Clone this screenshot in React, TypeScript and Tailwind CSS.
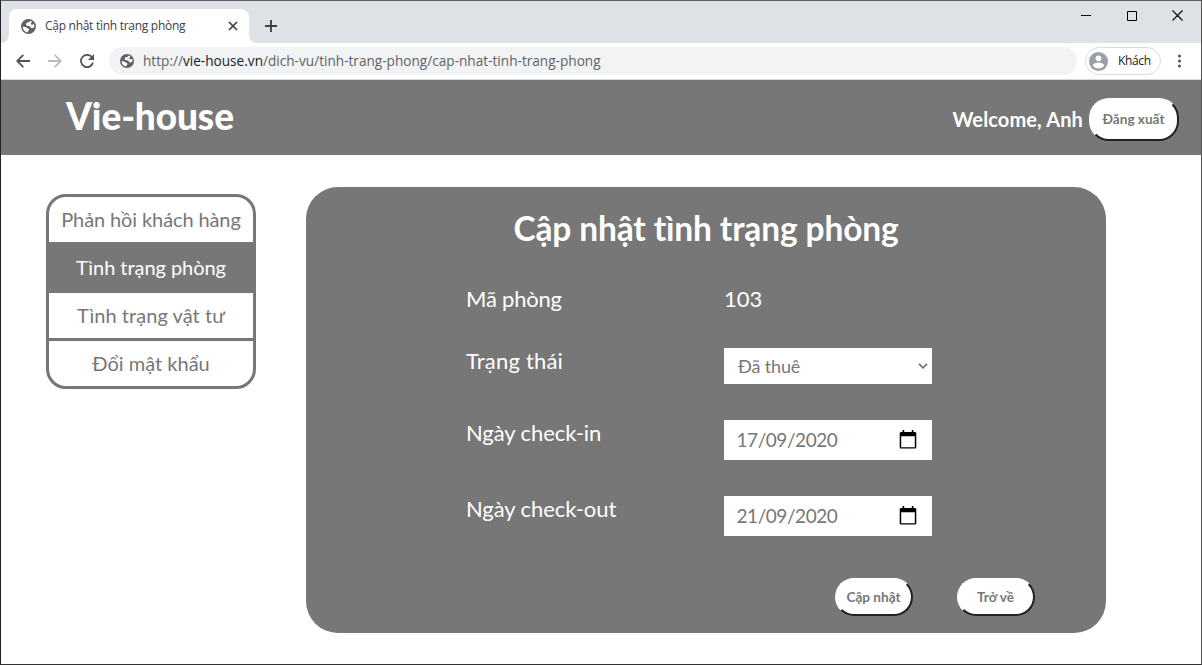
import type { ReactNode } from 'react';

function Globe({ className }: { className: string }) {
  return (
    <svg viewBox="0 0 14 14" className={className}>
      <circle cx="7" cy="7" r="7" fill="#5f6368" />
      <path
        d="M8.500 1.600C8.300 2.800 7.300 3 6.200 3.200C5 3.500 4.500 4.400 4.700 5.300C5 6.300 6.400 6.400 7.600 6.500C8.900 6.600 8.900 8.200 9.800 8.400C10.700 8.600 11.600 8.300 12.400 7.800C12.600 6.700 12.400 5.600 12 4.700C11.200 5.600 9.800 5.500 9.300 4.800C8.900 4.200 9.400 3.500 10.400 2.700C9.900 2.200 9.200 1.800 8.500 1.600ZM1.600 7.300C3 7.300 4.600 7.500 5.500 8.200C6.300 8.800 7.500 9 7.500 10C7.500 11 6.200 11 6.100 12.500C3.500 12.100 1.600 10 1.600 7.300Z"
        fill="#fff"
      />
    </svg>
  );
}

function PillButton({ className, children }: { className: string; children: ReactNode }) {
  return (
    <button
      className={`flex shrink-0 items-center justify-center whitespace-nowrap rounded-[20px] border-2 border-t-white border-l-white border-r-[#212121] border-b-[#212121] bg-white pr-px pb-px text-[13.6px] leading-4 font-bold text-[#777] ${className}`}
    >
      {children}
    </button>
  );
}

function Calendar() {
  return (
    <svg viewBox="0 0 18 20" className="h-5 w-[18px]" fill="#000">
      <path
        d="M3.6 0h1.6v2h7.6V0h1.6v2h1.4c.9 0 1.5.6 1.5 1.4v13.8c0 .8-.6 1.4-1.5 1.4H2.2c-.9 0-1.5-.6-1.5-1.4V3.400C.7 2.600 1.300 2 2.200 2h1.400zM2.200 6.300v10.900h13.600V6.300z"
        fillRule="evenodd"
      />
    </svg>
  );
}

function TabStrip() {
  return (
    <div className="flex h-[42px] shrink-0 items-end bg-[#dee1e6]">
      <svg viewBox="0 0 8 8" className="h-2 w-2">
        <path d="M8 0A8 8 0 0 1 0 8H8Z" fill="#fff" />
      </svg>
      <div className="flex h-[34px] w-60 items-center rounded-t-lg bg-white pl-3">
        <Globe className="h-[15px] w-[15px] shrink-0" />
        <span className="ml-[9px] w-[142px] whitespace-nowrap font-['Open_Sans','Noto_Sans',sans-serif] text-[12px] tracking-[-0.28px] text-[#3c4043]">
          Cập nhật tình trạng phòng
        </span>
        <svg viewBox="0 0 10 10" className="ml-[41px] h-[10px] w-[10px]" stroke="#3c4043" strokeWidth="1.700">
          <path d="M1 1L9 9M9 1L1 9" />
        </svg>
      </div>
      <svg viewBox="0 0 8 8" className="h-2 w-2">
        <path d="M0 0A8 8 0 0 0 8 8H0Z" fill="#fff" />
      </svg>
      <svg viewBox="0 0 12 12" className="mb-[11px] ml-2 h-3 w-3" stroke="#3c4043" strokeWidth="1.900">
        <path d="M6 0V12M0 6H12" />
      </svg>
      <div className="mr-[18px] mb-[22px] ml-auto flex items-center gap-[35px]">
        <svg viewBox="0 0 10 10" className="h-[10px] w-[10px] overflow-visible" stroke="#000" shapeRendering="crispEdges">
          <path d="M-1 4.500H9" />
        </svg>
        <svg viewBox="0 0 10 10" className="h-[10px] w-[10px]" fill="none" stroke="#000">
          <path d="M.5.500h9v9h-9z" />
        </svg>
        <svg viewBox="0 0 11 11" className="h-[11px] w-[11px]" stroke="#000" strokeWidth="1.100">
          <path d="M.5.500L10.500 10.500M10.500.500L.5 10.500" />
        </svg>
      </div>
    </div>
  );
}

function Toolbar() {
  return (
    <div className="flex h-[37px] shrink-0 items-center border-b border-[#d6d8da] bg-white pl-[15px]">
      <svg viewBox="0 0 14 14" className="h-[14px] w-[14px]" fill="none" stroke="#505357" strokeWidth="1.800">
        <path d="M14 7H1.500M7.300.8L1.200 7l6.100 6.200" />
      </svg>
      <svg viewBox="0 0 14 14" className="ml-[18px] h-[14px] w-[14px]" fill="none" stroke="#babcbe" strokeWidth="1.800">
        <path d="M0 7H12.500M6.700.8L12.800 7l-6.100 6.200" />
      </svg>
      <svg viewBox="0 0 14 14" className="ml-[18px] h-[14px] w-[14px]">
        <path d="M12 3.300A6.100 6.100 0 1 0 13 8.600" fill="none" stroke="#505357" strokeWidth="1.800" />
        <path d="M14 0V6H8Z" fill="#505357" />
      </svg>
      <div className="ml-[15px] flex h-7 w-[968px] items-center rounded-full bg-[#f1f3f4] pl-[11px]">
        <Globe className="h-[14px] w-[14px] shrink-0" />
        <span className="ml-[9px] pt-px whitespace-nowrap font-['Open_Sans','Noto_Sans',sans-serif] text-[13.6px] tracking-[0.01px] text-[#5f6368]">
          http://<span className="text-[#202124]">vie-house.vn</span>/dich-vu/tinh-trang-phong/cap-nhat-tinh-trang-phong
        </span>
      </div>
      <div className="ml-2 flex h-7 w-[76px] shrink-0 items-center rounded-full border border-[#dadce0] pl-[3px]">
        <svg viewBox="0 0 19 19" className="h-[19px] w-[19px] shrink-0">
          <circle cx="9.500" cy="9.500" r="9.500" fill="#9aa0a6" />
          <circle cx="9.500" cy="6.300" r="2.900" fill="#fff" />
          <path d="M3.700 13.600c0-2 3.900-3.100 5.800-3.100s5.800 1.100 5.800 3.100c-1.300 1.900-3.400 3-5.800 3s-4.500-1.100-5.800-3z" fill="#fff" />
        </svg>
        <span className="ml-[10px] font-['Open_Sans','Noto_Sans',sans-serif] text-[12px] tracking-[-0.35px] text-[#202124]">
          Khách
        </span>
      </div>
      <svg viewBox="0 0 4 14" className="ml-4 h-[14px] w-1" fill="#505357">
        <circle cx="2.500" cy="2" r="1.500" />
        <circle cx="2.500" cy="7" r="1.500" />
        <circle cx="2.500" cy="12" r="1.500" />
      </svg>
    </div>
  );
}

const menu = [
  { label: 'Phản hồi khách hàng', style: 'bg-white tracking-[-0.11px]' },
  { label: 'Tình trạng phòng', style: 'bg-[#777] text-white tracking-[-0.05px]' },
  { label: 'Tình trạng vật tư', style: 'bg-white tracking-[0.05px]' },
  { label: 'Đổi mật khẩu', style: 'bg-white' },
];

function Sidebar() {
  return (
    <nav className="mt-[39px] ml-[45px] flex h-[195px] w-[210px] shrink-0 flex-col gap-[3px] overflow-hidden rounded-[20px] border-[3px] border-[#777] bg-[#777] text-[20px] leading-6 text-[#777]">
      {menu.map((item) => (
        <a key={item.label} className={`flex h-[45px] shrink-0 items-center justify-center pb-[2px] whitespace-nowrap ${item.style}`}>
          {item.label}
        </a>
      ))}
    </nav>
  );
}

function DateField({ value }: { value: string }) {
  return (
    <div className="flex h-10 w-52 items-center justify-between bg-white pr-[15.5px] pl-[12.5px] text-[19px] tracking-[-0.45px] text-[#777]">
      <span>{value}</span>
      <Calendar />
    </div>
  );
}

function Row({ label, className, labelStyle, children }: { label: string; className: string; labelStyle: string; children: ReactNode }) {
  return (
    <div className={`flex ${className}`}>
      <span className={`-mt-px w-[258px] shrink-0 text-[22px] leading-[27px] ${labelStyle}`}>{label}</span>
      {children}
    </div>
  );
}

export default function App() {
  return (
    <div className="flex h-[665px] w-[1202px] flex-col overflow-hidden border border-t-[#5f6164] border-r-[#555] border-b-[#333] border-l-[#222] bg-white font-[Lato,'Noto_Sans',sans-serif]">
      <TabStrip />
      <Toolbar />
      <header className="flex h-[75px] shrink-0 items-center bg-[#777] pr-[22px] pl-[65px] text-white">
        <h1 className="mb-[3px] text-[37px] leading-[44px] font-black tracking-[-0.1px]">Vie-house</h1>
        <span className="mt-[2px] mr-[6px] ml-auto text-[20px] leading-6 font-bold tracking-[0.12px]">Welcome, Anh</span>
        <PillButton className="mt-1 h-[43px] w-[90px]">Đăng xuất</PillButton>
      </header>
      <main className="flex flex-1 items-start">
        <Sidebar />
        <section className="mt-8 ml-[50px] flex h-[446px] w-[800px] shrink-0 flex-col rounded-[32px] bg-[#777] text-white">
          <h2 className="mt-5 text-center text-[33.5px] leading-[42px] font-bold tracking-[-0.14px]">Cập nhật tình trạng phòng</h2>
          <div className="mt-[37px] pl-40">
            <Row label="Mã phòng" className="h-[62px]" labelStyle="tracking-[-0.2px]">
              <span className="-mt-px text-[22px] leading-[27px]">103</span>
            </Row>
            <Row label="Trạng thái" className="h-[72px]" labelStyle="tracking-[0.2px]">
              <div className="flex h-9 w-52 items-center justify-between bg-white pr-1 pl-[14px] text-[18px] tracking-[-0.15px] text-[#777]">
                <span>Đã thuê</span>
                <svg viewBox="0 0 10 6" className="h-[6px] w-[10px]" fill="none" stroke="#777" strokeWidth="1.800">
                  <path d="M1 .8L5 4.800L9 .8" />
                </svg>
              </div>
            </Row>
            <Row label="Ngày check-in" className="h-[76px]" labelStyle="tracking-[-0.08px]">
              <DateField value="17/09/2020" />
            </Row>
            <Row label="Ngày check-out" className="h-[40px]" labelStyle="tracking-[-0.08px]">
              <DateField value="21/09/2020" />
            </Row>
          </div>
          <div className="mt-auto mr-[71px] mb-[17px] flex justify-end gap-11">
            <PillButton className="h-[38px] w-[78px]">Cập nhật</PillButton>
            <PillButton className="h-[38px] w-[78px]">Trở về</PillButton>
          </div>
        </section>
      </main>
    </div>
  );
}
